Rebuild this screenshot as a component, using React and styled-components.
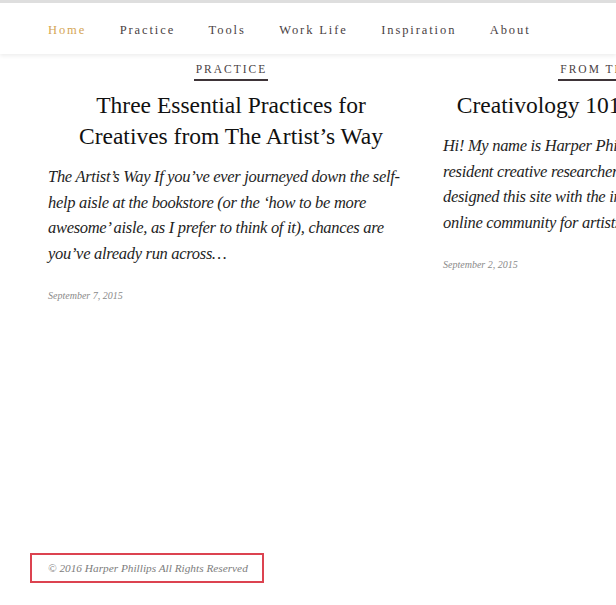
import React from 'react'
import styled, { createGlobalStyle } from 'styled-components'

const GlobalStyle = createGlobalStyle`
  html, body {
    margin: 0;
    padding: 0;
    background: #fff;
    overflow: hidden;
  }
  body {
    font-family: "Liberation Serif", "DejaVu Serif", serif;
    color: #222;
  }
`

const Page = styled.div`
  width: 616px;
  height: 605px;
  display: flex;
  flex-direction: column;
  border-top: 3px solid #dedede;
  box-sizing: border-box;
  overflow: hidden;
`

const NavBar = styled.nav`
  height: 51px;
  display: flex;
  align-items: center;
  gap: 33.5px;
  padding: 0 48px;
  background: #fff;
  box-shadow: 0 2px 4px rgba(0, 0, 0, 0.07);
  position: relative;
  z-index: 1;
`

const NavLink = styled.a`
  font-size: 12.5px;
  letter-spacing: 1.9px;
  color: ${props => (props.active ? '#d5a655' : '#4a3f44')};
  text-decoration: none;
  white-space: nowrap;
  margin-top: 4px;
`

const Posts = styled.main`
  display: flex;
  gap: 29px;
  padding: 9px 0 0 48px;
  flex: 1;
`

const Post = styled.article`
  flex: 0 0 366px;
  display: flex;
  flex-direction: column;
  align-items: center;
`

const Category = styled.span`
  font-size: 11.5px;
  letter-spacing: 2px;
  color: #4a3f44;
  padding: 0 1px 4px 2px;
  border-bottom: 2px solid #3e3438;
  white-space: nowrap;
`

const Title = styled.h2`
  margin: 9px 0 0;
  font-size: 23.5px;
  font-weight: 400;
  line-height: 31px;
  text-align: center;
  color: #111;
  white-space: nowrap;
`

const Excerpt = styled.p`
  align-self: stretch;
  margin: 12px 0 0;
  font-size: 16.5px;
  font-style: italic;
  letter-spacing: -0.3px;
  line-height: 25.5px;
  color: #1e1e1e;
  white-space: nowrap;
`

const PostDate = styled.time`
  align-self: flex-start;
  margin-top: 24px;
  font-size: 10px;
  font-style: italic;
  color: #8a8a8a;
`

const Footer = styled.footer`
  padding: 0 0 22px 30px;
`

const Copyright = styled.div`
  display: inline-block;
  border: 2px solid #dc4350;
  padding: 7px 14px 7px 16px;
  font-size: 11.3px;
  font-style: italic;
  color: #7d7d7d;
`

const navItems = ['Home', 'Practice', 'Tools', 'Work Life', 'Inspiration', 'About']

export default function App() {
  return (
    <>
      <GlobalStyle />
      <Page>
        <NavBar>
          {navItems.map((item, i) => (
            <NavLink key={item} href="#" active={i === 0 ? 1 : 0}>
              {item}
            </NavLink>
          ))}
        </NavBar>
        <Posts>
          <Post>
            <Category>PRACTICE</Category>
            <Title>
              Three Essential Practices for
              <br />
              Creatives from The Artist’s Way
            </Title>
            <Excerpt>
              The Artist’s Way If you’ve ever journeyed down the self-
              <br />
              help aisle at the bookstore (or the ‘how to be more
              <br />
              awesome’ aisle, as I prefer to think of it), chances are
              <br />
              you’ve already run across…
            </Excerpt>
            <PostDate>September 7, 2015</PostDate>
          </Post>
          <Post>
            <Category>FROM THE EDITOR</Category>
            <Title>Creativology 101: A Fond Welcome</Title>
            <Excerpt>
              Hi! My name is Harper Phillips, and I am the
              <br />
              resident creative researcher here. I have
              <br />
              designed this site with the intention of building an
              <br />
              online community for artists and makers.
            </Excerpt>
            <PostDate>September 2, 2015</PostDate>
          </Post>
        </Posts>
        <Footer>
          <Copyright>© 2016 Harper Phillips All Rights Reserved</Copyright>
        </Footer>
      </Page>
    </>
  )
}
